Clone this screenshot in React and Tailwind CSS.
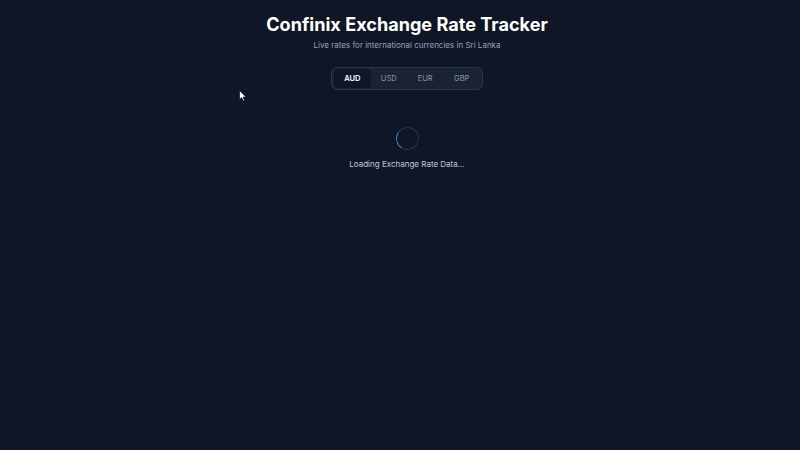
import React from "react";

const currencies = ["AUD", "USD", "EUR", "GBP"];

export default function App() {
  return (
    <div
      className="relative min-h-[450px] w-full bg-[#0f1626] text-white"
      style={{ fontFamily: "Inter, 'Liberation Sans', sans-serif" }}
    >
      <div className="flex flex-col items-center pl-[14px] pt-[13px]">
        <h1 className="text-[18.1px] font-bold leading-[23px]">
          Confinix Exchange Rate Tracker
        </h1>
        <p className="mt-[4px] text-[8px] leading-[11px] text-[#94a3b8]">
          Live rates for international currencies in Sri Lanka
        </p>

        {/* selector de moneda */}
        <div className="mt-[16px] flex h-[23px] items-center rounded-md border border-[#2a3546] bg-[#1a2333] px-[2px]">
          {currencies.map((c, i) => (
            <button
              key={c}
              className={
                i === 0
                  ? "h-[19px] w-[36.5px] rounded-[4px] bg-[#0f1626] text-[7.5px] font-semibold text-white"
                  : "h-[19px] w-[36.5px] rounded-[4px] text-[7.5px] text-[#8b95a5]"
              }
            >
              {c}
            </button>
          ))}
        </div>

        {/* cargando */}
        <div className="mt-[37px] h-[23px] w-[23px] -rotate-12 rounded-full border-[1.5px] border-[#2a3548] border-l-[#4a80d4]" />
        <p className="mt-[9px] text-[8px] leading-[11px] text-[#c3cad5]">
          Loading Exchange Rate Data...
        </p>
      </div>

      <svg
        className="absolute left-[239px] top-[90px]"
        width="8"
        height="12"
        viewBox="0 0 8 12"
      >
        <path d="M0.5 0.5 L0.5 9.5 L2.7 7.6 L4.2 11 L5.5 10.4 L4.1 7.1 L7 7.1 Z" fill="#fff" stroke="#000" strokeWidth="0.6" />
      </svg>
    </div>
  );
}
